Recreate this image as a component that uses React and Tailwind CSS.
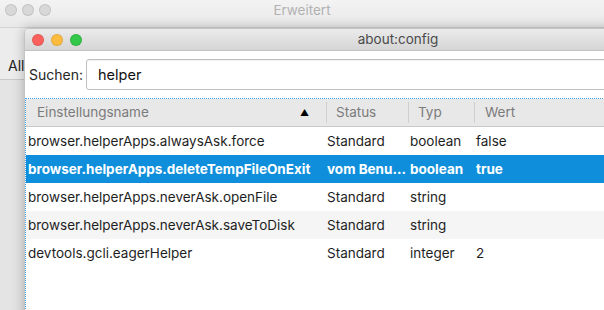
const rows = [
  { name: "browser.helperApps.alwaysAsk.force", status: "Standard", type: "boolean", value: "false" },
  { name: "browser.helperApps.deleteTempFileOnExit", status: "vom Benu...", type: "boolean", value: "true", selected: true },
  { name: "browser.helperApps.neverAsk.openFile", status: "Standard", type: "string", value: "" },
  { name: "browser.helperApps.neverAsk.saveToDisk", status: "Standard", type: "string", value: "", alt: true },
  { name: "devtools.gcli.eagerHelper", status: "Standard", type: "integer", value: "2" },
];

function Lights({ colors, gap }) {
  return (
    <div className={`flex ${gap}`}>
      {colors.map((c, i) => (
        <span
          key={i}
          className="block h-[12px] w-[12px] rounded-full border border-black/10"
          style={{ background: c }}
        />
      ))}
    </div>
  );
}

export default function App() {
  return (
    <div
      className="relative h-[310px] w-[604px] overflow-hidden bg-[#ececec] text-[13.5px]"
      style={{ fontFamily: "Inter, 'Noto Sans', sans-serif" }}
    >
      {/* window behind */}
      <div className="flex h-full flex-col">
        <div className="relative h-[28px] border-b border-[#d4d4d4] bg-gradient-to-b from-[#f3f3f3] to-[#e9e9e9]">
          <div className="absolute left-[5px] top-[4px]">
            <Lights colors={["#d8d8d8", "#d8d8d8", "#d8d8d8"]} gap="gap-[5px]" />
          </div>
          <div className="text-center leading-[20px] text-[#b2b2b2]">Erweitert</div>
        </div>
        <div className="flex h-[52px] items-end border-b border-[#c9c9c9] bg-[#ececec] pb-[3px] pl-[8px] text-[14px] text-[#222]">
          All
        </div>
        <div className="flex-1 bg-gradient-to-r from-[#e4e4e4] to-[#c6c6c6]" />
      </div>

      {/* about:config window */}
      <div className="absolute left-[24px] top-[28px] flex h-[300px] w-[748px] flex-col overflow-hidden rounded-t-[5px] border border-[#c4c4c4] bg-white shadow-[0_0_12px_rgba(0,0,0,0.25)]">
        <div className="relative flex h-[22px] items-center justify-center border-b border-[#c2c2c2] bg-gradient-to-b from-[#ebebeb] to-[#d5d5d5]">
          <div className="absolute left-[7px] top-[5px]">
            <Lights colors={["#fc605c", "#fdbc40", "#34c84a"]} gap="gap-[7px]" />
          </div>
          <span className="text-[#4a4a4a]">about:config</span>
        </div>

        <div className="flex h-[47px] items-center gap-[3px] pl-[4px] text-[14px] text-[#262626]">
          <span>Suchen:</span>
          <div className="flex h-[31px] flex-1 items-center rounded-[3px] border border-[#bfbfbf] pl-[11px] text-[14.5px] text-[#111] shadow-[inset_0_1px_1px_rgba(0,0,0,0.06)]">
            helper
          </div>
        </div>

        <div className="flex-1 border-l border-t border-dotted border-[#3f9ee8]">
          <div className="grid h-[28px] grid-cols-[301px_82px_66px_1fr] items-center border-b border-[#c8c8c8] bg-[#e8e8e8] text-[#7b7b7b]">
            <div className="flex items-center justify-between border-r border-[#cfcfcf] pl-[11px] pr-[17px]">
              <span>Einstellungsname</span>
              <span className="text-[9px] text-black">▲</span>
            </div>
            <div className="border-r border-[#cfcfcf] pl-[9px]">Status</div>
            <div className="border-r border-[#cfcfcf] pl-[9px]">Typ</div>
            <div className="pl-[10px]">Wert</div>
          </div>
          {rows.map((r) => (
            <div
              key={r.name}
              className={`grid h-[28px] grid-cols-[301px_82px_66px_1fr] items-center ${
                r.selected
                  ? "bg-[#0f8fdb] font-bold text-white"
                  : r.alt
                  ? "bg-[#f5f5f5] text-[#1e1e1e]"
                  : "bg-white text-[#1e1e1e]"
              }`}
            >
              <div className="truncate pl-[2px]">{r.name}</div>
              <div className="whitespace-nowrap">{r.status}</div>
              <div className="pl-[1px]">{r.type}</div>
              <div className="pl-[1px]">{r.value}</div>
            </div>
          ))}
        </div>
      </div>
    </div>
  );
}
